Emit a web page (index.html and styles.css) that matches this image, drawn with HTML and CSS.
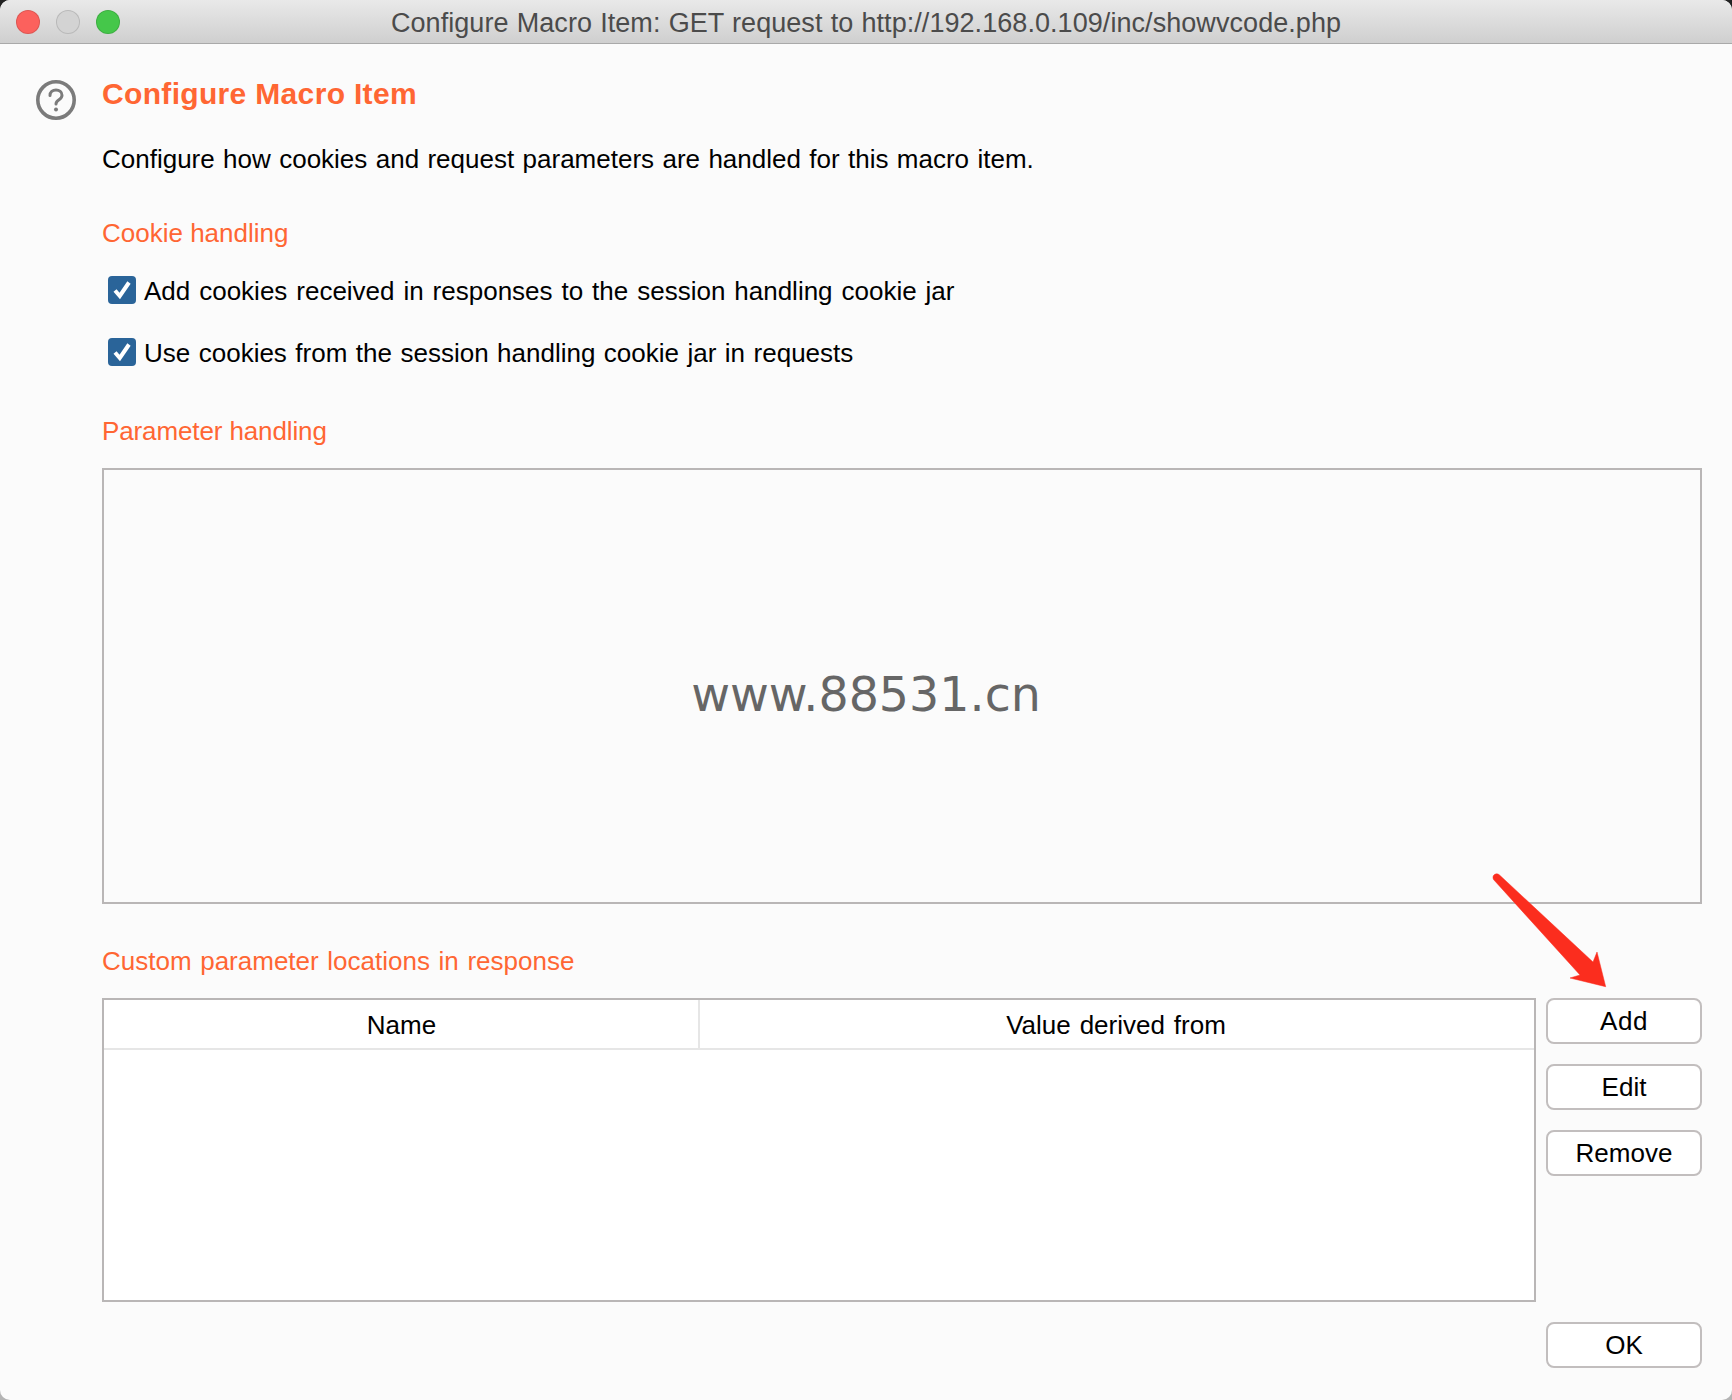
FILE: index.html
```html
<!DOCTYPE html>
<html lang="en">
<head>
<meta charset="utf-8">
<title>Configure Macro Item</title>
<link rel="stylesheet" href="styles.css">
</head>
<body>
<div class="window">
  <header class="titlebar">
    <div class="lights">
      <span class="light red"></span>
      <span class="light grey"></span>
      <span class="light green"></span>
    </div>
    <div class="window-title">Configure Macro Item: GET request to http://192.168.0.109/inc/showvcode.php</div>
  </header>
  <main class="main">
    <div class="help-col">
      <svg class="help" viewBox="0 0 40 40" width="40" height="40">
        <circle cx="20" cy="20" r="18.2" fill="none" stroke="#7b7b7b" stroke-width="3.600"/>
        <path d="M14 15.500c0-3.400 2.700-5.500 6-5.500s6 2.100 6 5.200c0 2.200-1.200 3.300-3 4.500-1.700 1.100-3 2-3 4.300" fill="none" stroke="#7b7b7b" stroke-width="3" stroke-linecap="round"/>
        <circle cx="20" cy="29.500" r="2" fill="#7b7b7b"/>
      </svg>
    </div>
    <div class="content">
      <h1 class="heading">Configure Macro Item</h1>
      <p class="desc">Configure how cookies and request parameters are handled for this macro item.</p>
      <h2 class="section s-cookie">Cookie handling</h2>
      <label class="check c-first">
        <span class="box"><svg viewBox="0 0 28 28" width="28" height="28"><path d="M7 14.500l4.800 5.500L21 6.500" fill="none" stroke="#fff" stroke-width="4"/></svg></span>
        <span>Add cookies received in responses to the session handling cookie jar</span>
      </label>
      <label class="check c-second">
        <span class="box"><svg viewBox="0 0 28 28" width="28" height="28"><path d="M7 14.500l4.800 5.500L21 6.500" fill="none" stroke="#fff" stroke-width="4"/></svg></span>
        <span>Use cookies from the session handling cookie jar in requests</span>
      </label>
      <h2 class="section s-param">Parameter handling</h2>
      <div class="param-box"></div>
      <h2 class="section s-custom">Custom parameter locations in response</h2>
      <div class="table-row">
        <div class="table">
          <div class="thead">
            <div class="th th-name">Name</div>
            <div class="th th-value">Value derived from</div>
          </div>
        </div>
        <div class="actions">
          <button class="btn btn-add">Add</button>
          <button class="btn">Edit</button>
          <button class="btn">Remove</button>
        </div>
      </div>
      <div class="footer"><button class="btn">OK</button></div>
    </div>
  </main>
  <div class="watermark">www.88531.cn</div>
  <svg class="arrow" viewBox="0 0 120 120" width="120" height="120">
    <path d="M1.500 7.500C0.500 5.500 1 3.500 2.500 2.500 4 1.500 6 1.700 7.500 3L101 90 105 80 113.700 114.700 78 106 88 103z" fill="#fb2d1e" stroke="#fb2d1e" stroke-width="0.500" stroke-linejoin="round"/>
  </svg>
</div>
</body>
</html>
```
FILE: styles.css
```css
* { box-sizing: border-box; }
html, body { margin: 0; padding: 0; }
body {
  width: 1732px;
  height: 1400px;
  overflow: hidden;
  background: linear-gradient(#222 0, #222 40px, #b4b4b4 40px);
  font-family: "Liberation Sans", Arial, sans-serif;
}
.window {
  position: relative;
  width: 1732px;
  height: 1400px;
  background: #fbfbfb;
  border-radius: 10px;
  overflow: hidden;
  color: #000;
}
.titlebar {
  position: relative;
  height: 44px;
  display: flex;
  align-items: center;
  justify-content: center;
  background: linear-gradient(#e9e9e9, #cfcfcf);
  border-bottom: 1px solid #a9a9a9;
}
.lights { position: absolute; left: 16px; top: 10px; display: flex; gap: 16px; }
.light { width: 24px; height: 24px; border-radius: 50%; border: 1px solid rgba(0,0,0,.12); }
.red { background: #fc615d; }
.grey { background: #d3d3d3; }
.green { background: #45c74a; }
.window-title { font-size: 27px; color: #4b4b4b; padding-top: 3px; word-spacing: .6px; letter-spacing: .06px; }
.main { display: flex; }
.help-col { width: 102px; flex: none; padding: 36px 0 0 36px; }
.help { display: block; }
.content { flex: 1; min-width: 0; padding: 35px 30px 0 0; }
.heading { margin: 0; font-size: 30px; line-height: 30px; font-weight: 700; color: #ff6633; letter-spacing: .33px; }
.desc { margin: 35px 0 0; font-size: 26px; line-height: 30px; word-spacing: 1.15px; }
.section { margin: 0; font-size: 26px; line-height: 30px; font-weight: 400; color: #ff6633; }
.s-cookie { margin-top: 44px; }
.s-param { margin-top: 48px; letter-spacing: -.12px; }
.s-custom { margin-top: 42px; word-spacing: 1.4px; }
.check { display: flex; align-items: flex-start; gap: 8px; padding-left: 6px; font-size: 26px; line-height: 30px; }
.c-first { margin-top: 28px; word-spacing: 1.7px; }
.c-second { margin-top: 32px; word-spacing: 1.25px; }
.box { width: 28px; height: 28px; flex: none; background: #2a6499; border-radius: 4px; }
.box svg { display: block; }
.param-box { margin-top: 22px; height: 436px; border: 2px solid #b9b6b6; }
.table-row { margin-top: 22px; display: flex; gap: 10px; align-items: flex-start; }
.table { width: 1434px; height: 304px; background: #fff; border: 2px solid #b9b6b6; }
.thead { display: flex; height: 50px; border-bottom: 2px solid #e6e6e6; }
.th { display: flex; align-items: center; justify-content: center; font-size: 26px; padding-top: 3px; }
.th-name { width: 596px; border-right: 2px solid #e6e6e6; padding-left: 1px; }
.th-value { flex: 1; word-spacing: 1.7px; padding-right: 2px; }
.actions { width: 156px; flex: none; display: flex; flex-direction: column; gap: 20px; }
.btn {
  display: block;
  width: 156px;
  height: 46px;
  padding: 0;
  background: #fff;
  border: 2px solid #c2bebe;
  border-radius: 8px;
  font: 26px "Liberation Sans", Arial, sans-serif;
  color: #000;
}
.btn-add { letter-spacing: .6px; }
.footer { margin-top: 20px; display: flex; justify-content: flex-end; }
.watermark {
  position: absolute;
  left: 0;
  right: 0;
  top: 665px;
  text-align: center;
  font-family: "DejaVu Sans", sans-serif;
  font-size: 47.5px;
  line-height: 60px;
  color: #666;
}
.arrow { position: absolute; left: 1492px; top: 872px; }
```
